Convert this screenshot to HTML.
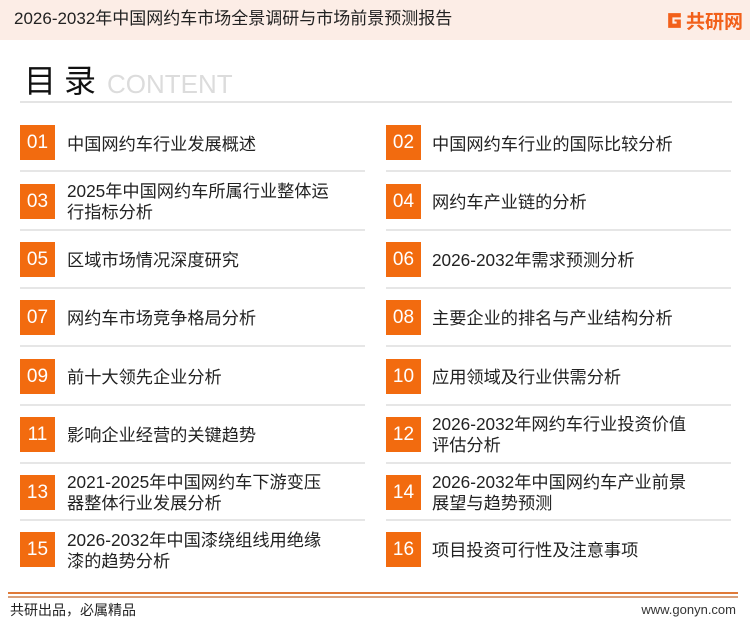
<!DOCTYPE html>
<html><head><meta charset="utf-8"><style>
*{margin:0;padding:0;box-sizing:border-box}
body{width:750px;height:622px;background:#fff;position:relative;overflow:hidden;font-family:"Liberation Sans","Noto Sans CJK SC",sans-serif;color:#222}
.hdr{position:absolute;left:0;top:0;width:750px;height:40px;background:#fcede6}
.hdr .t{position:absolute;left:14px;top:8px;font-size:17px;line-height:22px;color:#222}
.logo{position:absolute;left:666px;top:8px;height:24px;display:flex;align-items:center}
.logo span{font-size:19px;font-weight:bold;color:#f2601a;margin-left:3px}
.title{position:absolute;left:24px;top:63px;font-size:32px;line-height:36px;color:#111;letter-spacing:8px}
.ct{position:absolute;left:107px;top:70px;font-size:26px;line-height:28px;color:#dcdcdc}
.hl{position:absolute;left:20px;top:101px;width:712px;height:2px;background:#e4e4e4}
.box{position:absolute;width:35px;height:35px;background:#f26b0f;color:#fff;font-size:19px;text-align:center;line-height:35px}
.tx{position:absolute;font-size:17.2px;line-height:21px;color:#222;width:270px}
.sep{position:absolute;height:2px;background:#e6e6e6;width:345px}
.f1{position:absolute;left:8px;top:592px;width:730px;height:2px;background:#e07a38}
.f2{position:absolute;left:8px;top:596px;width:730px;height:2px;background:#d9a07a}
.fl{position:absolute;left:10px;top:600px;font-size:14px}
.fr{position:absolute;right:14px;top:602px;font-size:13px;color:#333}
</style></head><body>
<div class="hdr"><div class="t">2026-2032年中国网约车市场全景调研与市场前景预测报告</div>
<div class="logo"><svg width="17" height="19" viewBox="0 0 16 18"><path d="M2 2h12v4H6v6h4v-2H8V8h6v8H2z" fill="#f2601a"/></svg><span>共研网</span></div></div>
<div class="title">目录</div><div class="ct">CONTENT</div>
<div class="hl"></div>

<div class="box" style="left:20px;top:125px">01</div><div class="tx" style="left:67px;top:134px">中国网约车行业发展概述</div>
<div class="box" style="left:386px;top:125px">02</div><div class="tx" style="left:432px;top:134px">中国网约车行业的国际比较分析</div>
<div class="sep" style="left:20px;top:170px"></div><div class="sep" style="left:386px;top:170px"></div>

<div class="box" style="left:20px;top:184px">03</div><div class="tx" style="left:67px;top:181px">2025年中国网约车所属行业整体运行指标分析</div>
<div class="box" style="left:386px;top:184px">04</div><div class="tx" style="left:432px;top:192px">网约车产业链的分析</div>
<div class="sep" style="left:20px;top:229px"></div><div class="sep" style="left:386px;top:229px"></div>

<div class="box" style="left:20px;top:242px">05</div><div class="tx" style="left:67px;top:250px">区域市场情况深度研究</div>
<div class="box" style="left:386px;top:242px">06</div><div class="tx" style="left:432px;top:250px">2026-2032年需求预测分析</div>
<div class="sep" style="left:20px;top:287px"></div><div class="sep" style="left:386px;top:287px"></div>

<div class="box" style="left:20px;top:300px">07</div><div class="tx" style="left:67px;top:308px">网约车市场竞争格局分析</div>
<div class="box" style="left:386px;top:300px">08</div><div class="tx" style="left:432px;top:308px">主要企业的排名与产业结构分析</div>
<div class="sep" style="left:20px;top:345px"></div><div class="sep" style="left:386px;top:345px"></div>

<div class="box" style="left:20px;top:359px">09</div><div class="tx" style="left:67px;top:367px">前十大领先企业分析</div>
<div class="box" style="left:386px;top:359px">10</div><div class="tx" style="left:432px;top:367px">应用领域及行业供需分析</div>
<div class="sep" style="left:20px;top:404px"></div><div class="sep" style="left:386px;top:404px"></div>

<div class="box" style="left:20px;top:417px">11</div><div class="tx" style="left:67px;top:425px">影响企业经营的关键趋势</div>
<div class="box" style="left:386px;top:417px">12</div><div class="tx" style="left:432px;top:414px">2026-2032年网约车行业投资价值评估分析</div>
<div class="sep" style="left:20px;top:462px"></div><div class="sep" style="left:386px;top:462px"></div>

<div class="box" style="left:20px;top:475px">13</div><div class="tx" style="left:67px;top:472px">2021-2025年中国网约车下游变压器整体行业发展分析</div>
<div class="box" style="left:386px;top:475px">14</div><div class="tx" style="left:432px;top:472px">2026-2032年中国网约车产业前景展望与趋势预测</div>
<div class="sep" style="left:20px;top:519px"></div><div class="sep" style="left:386px;top:519px"></div>

<div class="box" style="left:20px;top:532px">15</div><div class="tx" style="left:67px;top:530px">2026-2032年中国漆绕组线用绝缘漆的趋势分析</div>
<div class="box" style="left:386px;top:532px">16</div><div class="tx" style="left:432px;top:540px">项目投资可行性及注意事项</div>

<div class="f1"></div><div class="f2"></div>
<div class="fl">共研出品，必属精品</div><div class="fr">www.gonyn.com</div>
</body></html>
